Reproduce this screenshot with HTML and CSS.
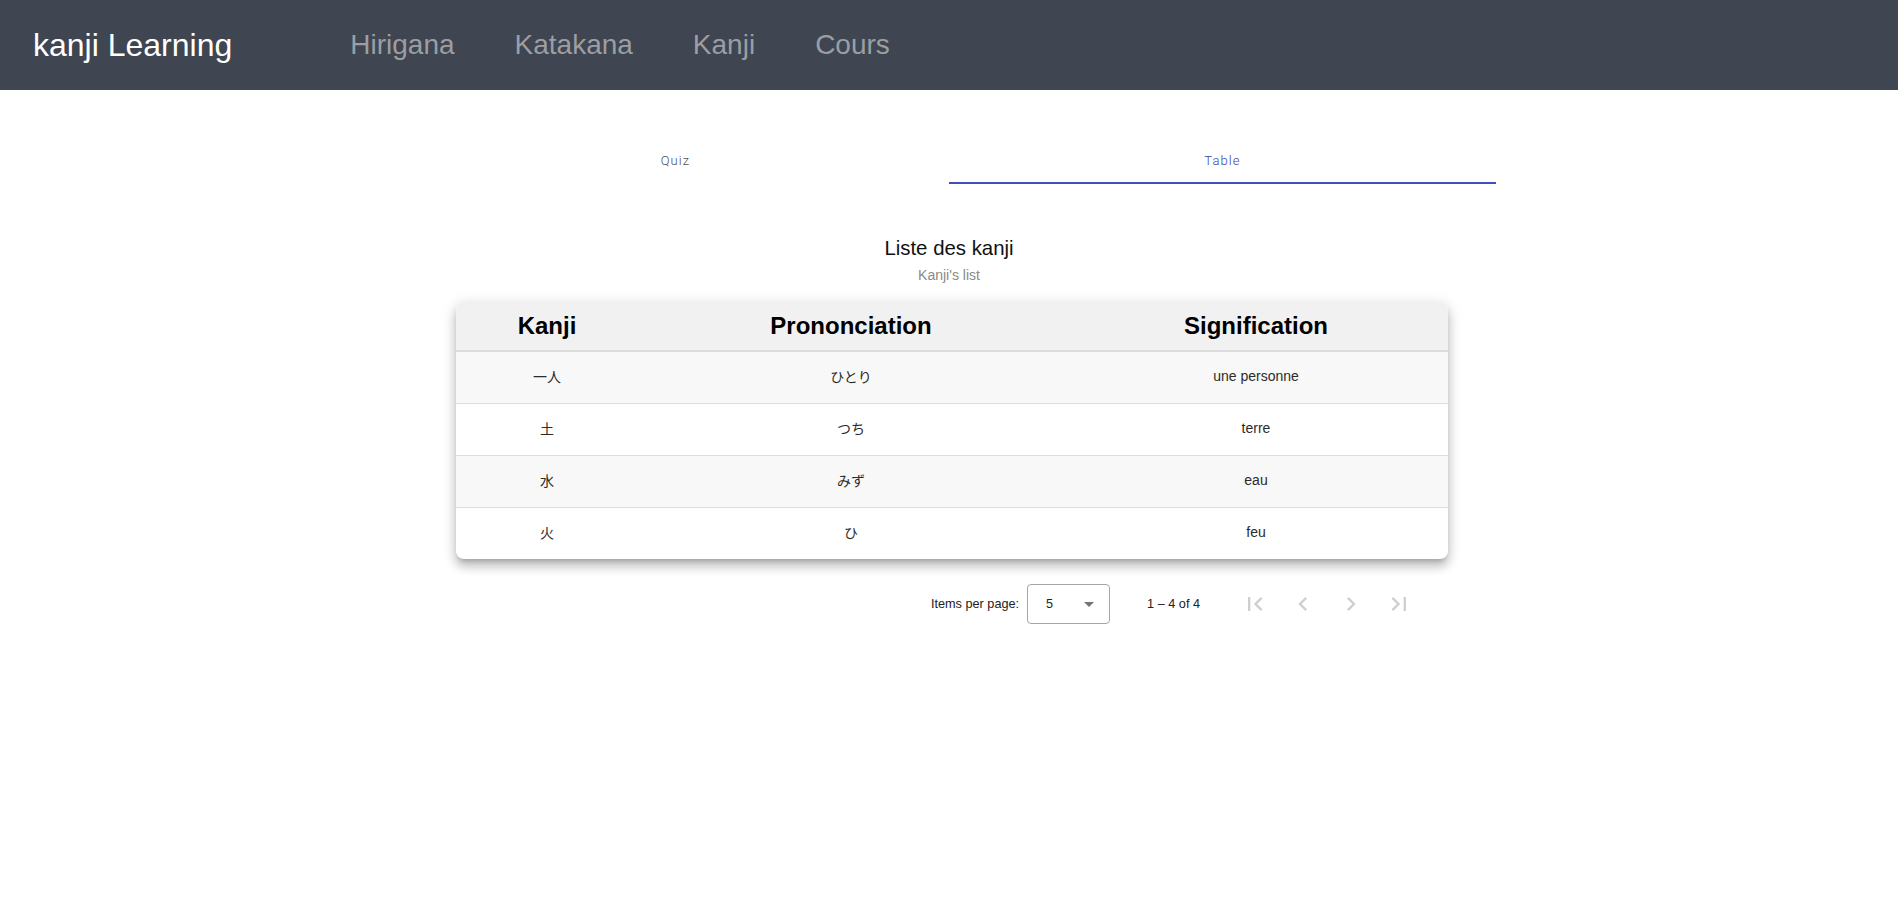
FILE: index.html
```html
<!DOCTYPE html>
<html lang="fr">
<head>
<meta charset="utf-8">
<title>kanji Learning</title>
<link rel="stylesheet" href="styles.css">
</head>
<body>
<header class="topbar">
  <a class="brand">kanji Learning</a>
  <nav class="nav">
    <a class="nav-link">Hirigana</a>
    <a class="nav-link">Katakana</a>
    <a class="nav-link">Kanji</a>
    <a class="nav-link">Cours</a>
  </nav>
</header>

<main class="card">
  <div class="tabs">
    <div class="tab">Quiz</div>
    <div class="tab active">Table</div>
  </div>

  <section class="tab-body">
    <h2 class="title">Liste des kanji</h2>
    <p class="subtitle">Kanji's list</p>

    <div class="table-wrap">
      <table class="ktable">
        <thead>
          <tr>
            <th class="c1">Kanji</th>
            <th class="c2">Prononciation</th>
            <th class="c3">Signification</th>
          </tr>
        </thead>
        <tbody>
          <tr class="odd"><td class="jp">一人</td><td class="jp">ひとり</td><td>une personne</td></tr>
          <tr><td class="jp">土</td><td class="jp">つち</td><td>terre</td></tr>
          <tr class="odd"><td class="jp">水</td><td class="jp">みず</td><td>eau</td></tr>
          <tr class="last"><td class="jp">火</td><td class="jp">ひ</td><td>feu</td></tr>
        </tbody>
      </table>
    </div>

    <div class="paginator">
      <span class="pg-label">Items per page:</span>
      <div class="pg-select">
        <span>5</span>
        <span class="pg-arrow"></span>
      </div>
      <span class="pg-range">1 – 4 of 4</span>
      <div class="pg-buttons">
        <button class="pg-btn" aria-label="First page"><svg viewBox="0 0 24 24" width="28" height="28"><path d="M18.41 16.59L13.82 12l4.59-4.59L17 6l-6 6 6 6zM6 6h2v12H6z"/></svg></button>
        <button class="pg-btn" aria-label="Previous page"><svg viewBox="0 0 24 24" width="28" height="28"><path d="M15.41 7.41L14 6l-6 6 6 6 1.41-1.41L10.83 12z"/></svg></button>
        <button class="pg-btn" aria-label="Next page"><svg viewBox="0 0 24 24" width="28" height="28"><path d="M10 6L8.59 7.41 13.17 12l-4.58 4.59L10 18l6-6z"/></svg></button>
        <button class="pg-btn" aria-label="Last page"><svg viewBox="0 0 24 24" width="28" height="28"><path d="M5.59 7.41L10.18 12l-4.59 4.59L7 18l6-6-6-6zM16 6h2v12h-2z"/></svg></button>
      </div>
    </div>
  </section>
</main>
</body>
</html>
```

FILE: styles.css
```css
* { box-sizing: border-box; }

body {
  margin: 0;
  font-family: "Liberation Sans", Arial, "Noto Sans CJK JP", sans-serif;
  background: #ffffff;
  color: #212121;
}

.topbar {
  height: 90px;
  background: #3f4551;
  display: flex;
  align-items: center;
  padding-left: 33px;
}

.brand {
  color: #ffffff;
  font-size: 32px;
  line-height: 40px;
}

.nav {
  display: flex;
  gap: 60px;
  margin-left: 118px;
}

.nav-link {
  color: #9b9ea3;
  font-size: 28px;
  line-height: 40px;
}

.card {
  width: 1094px;
  margin: 46px auto 0;
  padding-bottom: 47px;
  border-radius: 4px;
  box-shadow: 0 1px 1px -1px rgba(0,0,0,0.08);
}

.tabs {
  display: flex;
  height: 48px;
}

.tab {
  flex: 1;
  display: flex;
  align-items: center;
  justify-content: center;
  font-family: Roboto, "Liberation Sans", sans-serif;
  font-size: 13px;
  font-weight: 300;
  letter-spacing: 1.1px;
  color: #4f545a;
  border-bottom: 2px solid transparent;
  padding-top: 2px;
}

.tab.active {
  color: #3646a8;
  border-bottom-color: #3f51b5;
}

.tab-body {
  display: flex;
  flex-direction: column;
  align-items: center;
}

.title {
  margin: 52px 0 0;
  font-size: 20.4px;
  line-height: 24px;
  font-weight: 400;
  color: #111;
}

.subtitle {
  margin: 7px 0 0;
  font-size: 14px;
  line-height: 16px;
  color: #8a8a8a;
}

.table-wrap {
  align-self: flex-start;
  margin: 19px 0 0 54px;
  width: 992px;
  border-radius: 8px;
  overflow: hidden;
  box-shadow: 0 5px 5px -3px rgba(0,0,0,.2), 0 8px 10px 1px rgba(0,0,0,.14), 0 3px 14px 2px rgba(0,0,0,.12);
  background: #fff;
}

.ktable {
  width: 100%;
  border-collapse: separate;
  border-spacing: 0;
  text-align: center;
}

.ktable th {
  height: 50px;
  background: #f1f1f1;
  border-bottom: 2px solid #dcdcdc;
  font-size: 24px;
  font-weight: 700;
  color: #000;
  padding: 0;
}

.c1 { width: 182px; }
.c2 { width: 426px; }
.c3 { width: 384px; }

.ktable td {
  height: 52px;
  border-bottom: 1px solid #dddddd;
  font-size: 14px;
  color: #2b2b2b;
  padding: 0 0 4px;
}

.ktable tr.last td { border-bottom: none; height: 51px; }

.ktable tr.odd td { background: #f8f8f8; }

.jp {
  font-family: "Noto Sans CJK JP", "Liberation Sans", sans-serif;
  font-size: 13px;
}

.paginator {
  align-self: flex-start;
  margin: 17px 0 0 54px;
  width: 992px;
  height: 56px;
  display: flex;
  align-items: center;
  justify-content: flex-end;
  padding-right: 25px;
  font-size: 12.7px;
  color: #222;
}

.pg-label { margin-right: 8px; }

.pg-select {
  width: 83px;
  height: 40px;
  border: 1px solid #a6a6a6;
  border-radius: 4px;
  display: flex;
  align-items: center;
  justify-content: space-between;
  padding: 0 15px 0 18px;
  font-size: 12.7px;
}

.pg-arrow {
  width: 0;
  height: 0;
  border-left: 5px solid transparent;
  border-right: 5px solid transparent;
  border-top: 5px solid #757575;
}

.pg-range { margin-left: 37px; }

.pg-buttons {
  display: flex;
  margin-left: 31px;
}

.pg-btn {
  width: 48px;
  height: 48px;
  border: none;
  background: none;
  padding: 0;
  display: flex;
  align-items: center;
  justify-content: center;
  fill: #cfcfcf;
}
```
